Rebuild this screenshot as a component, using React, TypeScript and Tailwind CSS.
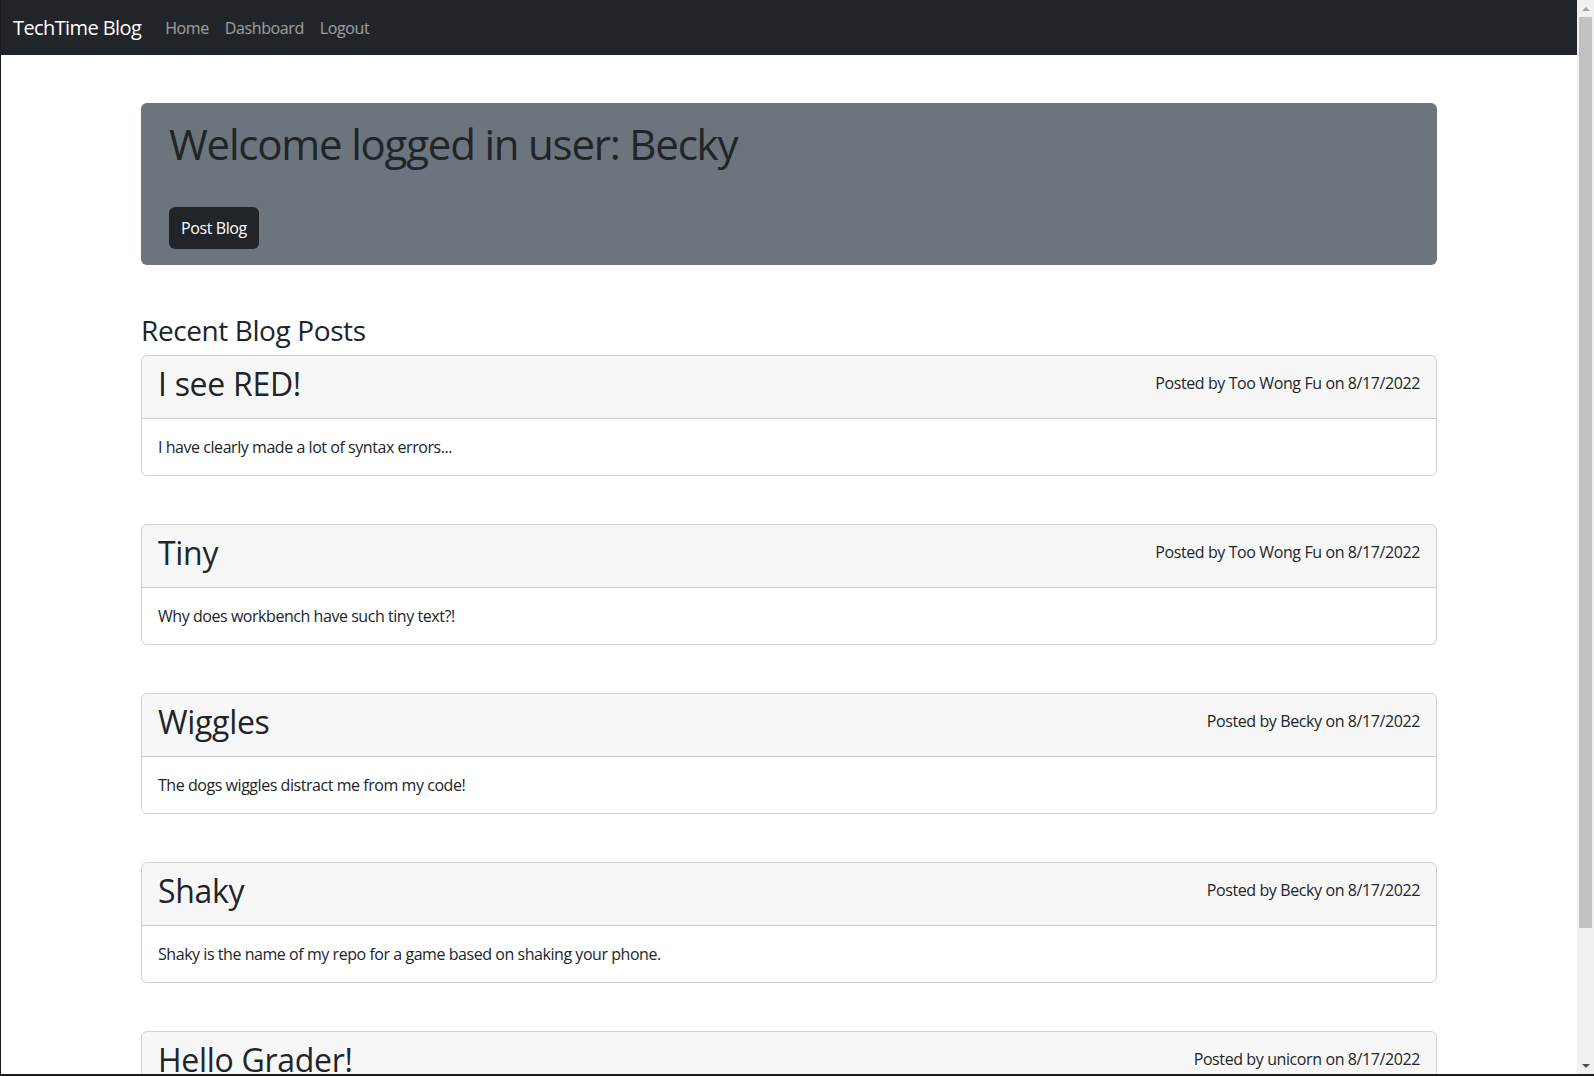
import React from 'react';

type Post = {
  id: number;
  title: string;
  author: string;
  date: string;
  body: string;
};

const posts: Post[] = [
  { id: 1, title: 'I see RED!', author: 'Too Wong Fu', date: '8/17/2022', body: 'I have clearly made a lot of syntax errors...' },
  { id: 2, title: 'Tiny', author: 'Too Wong Fu', date: '8/17/2022', body: 'Why does workbench have such tiny text?!' },
  { id: 3, title: 'Wiggles', author: 'Becky', date: '8/17/2022', body: 'The dogs wiggles distract me from my code!' },
  { id: 4, title: 'Shaky', author: 'Becky', date: '8/17/2022', body: 'Shaky is the name of my repo for a game based on shaking your phone.' },
  { id: 5, title: 'Hello Grader!', author: 'unicorn', date: '8/17/2022', body: 'Thanks for taking a look at my tech blog.' },
];

// window scrollbar, as it shows in the capture
function ScrollBar() {
  return (
    <div className="w-[17px] shrink-0 bg-[#f1f1f1] flex flex-col">
      <div className="h-[17px] flex items-center justify-center">
        <div className="w-0 h-0 border-x-[4px] border-x-transparent border-b-[4px] border-b-[#a3a3a3]" />
      </div>
      <div className="flex-1">
        <div className="h-[911px] mx-[2px] bg-[#c1c1c1]" />
      </div>
      <div className="h-[17px] flex items-center justify-center">
        <div className="w-0 h-0 border-x-[4px] border-x-transparent border-t-[4px] border-t-[#505050]" />
      </div>
    </div>
  );
}

export default function App() {
  return (
    <div className="h-screen flex bg-white border-l border-b-2 border-[#1c1c1c] text-[#212529] font-['Open_Sans',sans-serif]">
      <div className="flex-1 overflow-y-auto [scrollbar-width:none]">
        {/* navbar */}
        <nav className="bg-[#212529] h-[55px] px-3 flex items-center">
          <a href="#" className="text-white text-[20px] tracking-[-0.6px] mr-4">TechTime Blog</a>
          <div className="flex items-center">
            <a href="#" className="px-2 text-white/55 text-base tracking-[-0.4px]">Home</a>
            <a href="#" className="px-2 text-white/55 text-base tracking-[-0.4px]">Dashboard</a>
            <a href="#" className="px-2 text-white/55 text-base tracking-[-0.4px]">Logout</a>
          </div>
        </nav>

        <main className="w-[1296px] mx-auto pb-[78px]">
          {/* welcome box */}
          <div className="mt-12 bg-[#6c757d] rounded-md px-7 pt-4 pb-4">
            <h1 className="text-[42px] leading-[1.2] font-medium tracking-[-1.2px]">Welcome logged in user: Becky</h1>
            <button className="mt-[38px] bg-[#212529] text-white text-base tracking-[-0.4px] rounded-md px-3 py-[9px] leading-6">
              Post Blog
            </button>
          </div>

          <h3 className="mt-12 mb-2 text-[28px] leading-[34px] font-medium tracking-[-0.4px]">Recent Blog Posts</h3>

          <div className="flex flex-col gap-12">
            {posts.map((post) => (
              <div key={post.id} className="border border-black/[.175] rounded-md overflow-hidden">
                <div className="bg-black/[.03] border-b border-black/[.175] h-[63px] px-4 flex justify-between items-start">
                  <h2 className="text-[32px] leading-[1.2] font-medium tracking-[-0.3px] pt-[9px]">{post.title}</h2>
                  <p className="text-base leading-6 tracking-[-0.4px] pt-[15px]">
                    Posted by {post.author} on {post.date}
                  </p>
                </div>
                <div className="p-4">
                  <p className="text-base leading-6 tracking-[-0.45px]">{post.body}</p>
                </div>
              </div>
            ))}
          </div>
        </main>
      </div>
      <ScrollBar />
    </div>
  );
}
